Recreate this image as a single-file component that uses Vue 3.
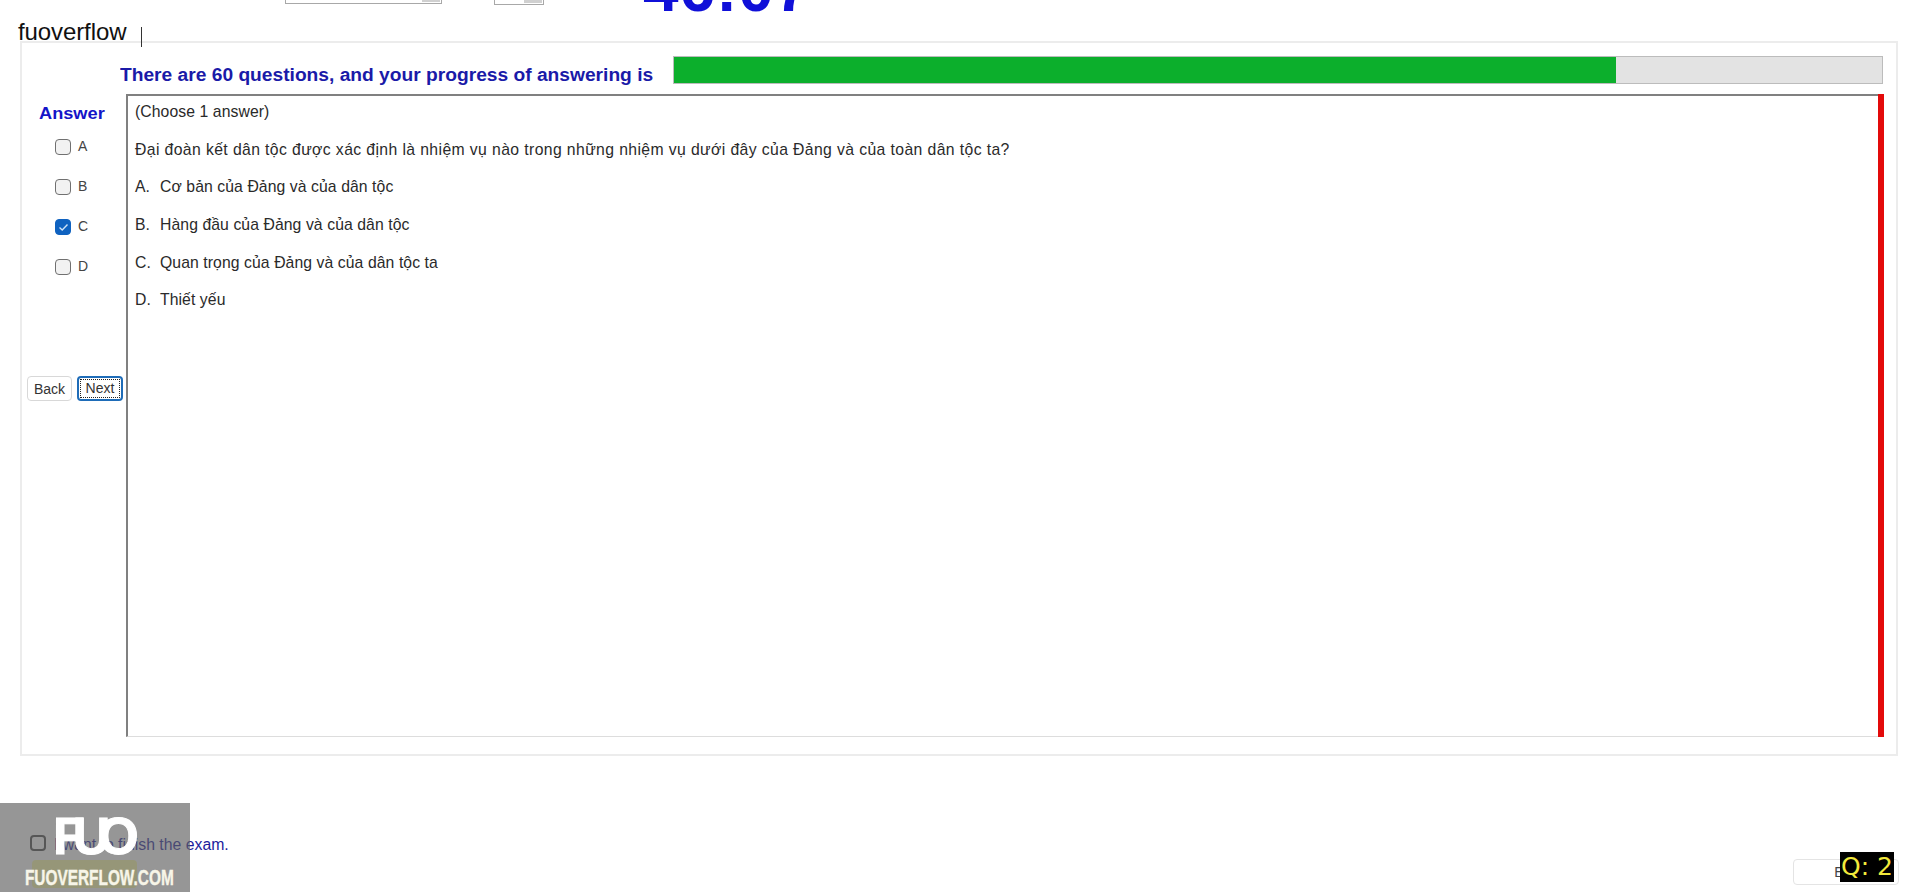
<template>
  <div class="page">
    <!-- header strip, cut off at the top of the page -->
    <div class="top">
      <div class="combo wide"><span class="arrow"></span></div>
      <div class="combo narrow"><span class="arrow"></span></div>
      <div class="clock">46:07</div>
    </div>

    <div class="brand">
      <span class="brand-name">fuoverflow</span>
      <span class="caret"></span>
    </div>

    <div class="panel">
      <div class="progress-row">
        <span class="progress-label">There are 60 questions, and your progress of answering is</span>
        <div class="progress">
          <div class="progress-fill" :style="{ width: progress + '%' }"></div>
        </div>
      </div>

      <div class="body">
        <div class="side">
          <div class="answer-title">Answer</div>
          <label v-for="opt in options" :key="opt.key" class="opt">
            <span class="box" :class="{ checked: opt.key === selected }">
              <svg v-if="opt.key === selected" width="11" height="9" viewBox="0 0 11 9">
                <path d="M1.5 4.5 L4.2 7 L9.5 1.5" fill="none" stroke="#cfe3f7" stroke-width="1.4" />
              </svg>
            </span>
            <span class="opt-key">{{ opt.key }}</span>
          </label>
          <div class="nav">
            <button class="btn">Back</button>
            <button class="btn next"><span class="focus">Next</span></button>
          </div>
        </div>

        <div class="question">
          <p class="line first">(Choose 1 answer)</p>
          <p class="line stem">{{ stem }}</p>
          <p v-for="opt in options" :key="opt.key" class="line">
            <span class="letter">{{ opt.key }}.</span>{{ opt.text }}
          </p>
          <div class="red"></div>
        </div>
      </div>
    </div>

    <div class="footer">
      <div class="finish-col">
        <label class="finish">
          <span class="box dark"></span>
          <span class="finish-text">I want to finish the exam.</span>
        </label>
        <div class="finish-btn"></div>
      </div>
      <button class="exit">Exit</button>
    </div>

    <!-- watermark logo and question tag lie over the footer -->
    <div class="watermark">
      <div class="logo">FUO</div>
      <div class="site">FUOVERFLOW.COM</div>
    </div>
    <div class="qtag">Q: 2</div>
  </div>
</template>

<script setup>
const progress = 78
const selected = 'C'
const stem = 'Đại đoàn kết dân tộc được xác định là nhiệm vụ nào trong những nhiệm vụ dưới đây của Đảng và của toàn dân tộc ta?'
const options = [
  { key: 'A', text: 'Cơ bản của Đảng và của dân tộc' },
  { key: 'B', text: 'Hàng đầu của Đảng và của dân tộc' },
  { key: 'C', text: 'Quan trọng của Đảng và của dân tộc ta' },
  { key: 'D', text: 'Thiết yếu' }
]
</script>

<style>
html, body {
  margin: 0;
  background: #fff;
  overflow: hidden;
}
</style>

<style scoped>
.page {
  position: relative;
  width: 1920px;
  height: 892px;
  overflow: hidden;
  font-family: "Liberation Sans", Arial, sans-serif;
  color: #222;
}

.top {
  height: 4px;
  display: flex;
  align-items: flex-start;
  padding-left: 285px;
}

.combo {
  border: 1px solid #a8a8a8;
  border-top: none;
  position: relative;
}

.wide { width: 155px; height: 3px; }
.narrow { width: 48px; height: 4px; margin-left: 52px; }

.arrow {
  position: absolute;
  right: 1px;
  bottom: 1px;
  width: 18px;
  height: 3px;
  background: #d0d0d0;
}

.clock {
  margin-left: 99px;
  height: 4px;
  line-height: 0;
  font-size: 64px;
  letter-spacing: 0.9px;
  font-weight: 700;
  color: #1010d8;
  width: 170px;
  white-space: nowrap;
  transform: translateY(-11px);
}

.brand {
  height: 37px;
  display: flex;
  align-items: flex-start;
  padding-left: 18px;
}

.brand-name {
  margin-top: 15px;
  font-size: 24px;
  line-height: 26px;
  color: #111;
  letter-spacing: -0.1px;
}

.caret {
  margin: 23px 0 0 15px;
  width: 1px;
  height: 20px;
  background: #333;
}

.panel {
  margin-left: 20px;
  width: 1878px;
  height: 715px;
  box-sizing: border-box;
  border: 2px solid #ececec;
  padding: 13px 12px 16px 0;
}

.progress-row {
  display: flex;
  align-items: center;
  height: 28px;
  padding-left: 98px;
}

.progress-label {
  width: 553px;
  margin-top: 10px;
  font-size: 18px;
  font-weight: 700;
  color: #1a1aa8;
  white-space: nowrap;
  transform: scaleX(1.066);
  transform-origin: left center;
}

.progress {
  flex: 1;
  height: 28px;
  margin-right: 1px;
  box-sizing: border-box;
  background: #e3e3e3;
  border: 1px solid #bcbcbc;
}

.progress-fill {
  height: 100%;
  background: #0caf2c;
}

.body {
  display: flex;
  margin-top: 10px;
}

.side {
  width: 104px;
  flex: none;
}

.answer-title {
  margin: 10px 0 0 17px;
  font-size: 17px;
  line-height: 20px;
  font-weight: 700;
  color: #1414c8;
  transform: scaleX(1.07);
  transform-origin: left center;
}

.opt {
  display: flex;
  align-items: center;
  height: 40px;
  padding-left: 33px;
  font-size: 14px;
  color: #444;
}

.opt:first-of-type { margin-top: 3px; }

.box {
  width: 16px;
  height: 16px;
  box-sizing: border-box;
  border: 1px solid #707070;
  border-radius: 4px;
  background: #f2f2f2;
  display: flex;
  align-items: center;
  justify-content: center;
}

.box.checked {
  background: #0f62c0;
  border-color: #0f62c0;
}

.box.dark {
  border: 2px solid #444;
  background: transparent;
  margin-top: -5px;
}

.opt-key {
  margin: -2px 0 0 7px;
}

.nav {
  display: flex;
  gap: 5px;
  margin: 89px 0 0 5px;
}

.btn {
  width: 45px;
  height: 25px;
  padding: 0;
  box-sizing: border-box;
  background: #fff;
  border: 1px solid #d8d8d8;
  border-radius: 4px;
  font-family: inherit;
  font-size: 14px;
  color: #333;
}

.next {
  width: 46px;
  border: 2px solid #1e6cb8;
}

.focus {
  display: block;
  margin: 1px;
  line-height: 17px;
  border: 1px dotted #222;
}

.question {
  flex: 1;
  position: relative;
  height: 643px;
  box-sizing: border-box;
  border-top: 2px solid #808080;
  border-left: 2px solid #808080;
  border-bottom: 1px solid #ddd;
  padding-left: 7px;
}

.line {
  margin: 0;
  height: 37.7px;
  line-height: 20px;
  font-size: 15.75px;
  letter-spacing: 0.08px;
  color: #2a2a2a;
  white-space: nowrap;
}

.first { margin-top: 6px; }

.stem { letter-spacing: 0.39px; }

.letter {
  display: inline-block;
  width: 25px;
}

.red {
  position: absolute;
  top: -2px;
  right: 0;
  bottom: -1px;
  width: 6px;
  background: #e30a0a;
}

.footer {
  display: flex;
  justify-content: space-between;
  padding: 0 21px 0 30px;
  margin-top: 78px;
}

.finish {
  display: flex;
  align-items: center;
  height: 22px;
  gap: 8px;
  font-size: 15.8px;
  color: #1c1c9c;
}

.finish-btn {
  width: 105px;
  height: 28px;
  margin: 4px 0 0 2px;
  background: #ffffa8;
  border-radius: 4px;
}

.exit {
  width: 106px;
  height: 26px;
  margin-top: 25px;
  background: #fff;
  border: 1px solid #e4e4e4;
  border-radius: 4px;
  font-family: inherit;
  font-size: 14px;
  color: #444;
}

.watermark {
  position: absolute;
  left: 0;
  bottom: 0;
  width: 190px;
  height: 89px;
  background: rgba(96, 96, 96, 0.66);
  color: #fff;
  font-weight: 700;
}

.logo {
  font-size: 52px;
  line-height: 46px;
  margin: 10px 0 0 53px;
  letter-spacing: -12px;
  -webkit-text-stroke: 1px #fff;
}

.site {
  font-size: 22px;
  line-height: 24px;
  margin: 7px 24px 0 0;
  text-align: center;
  white-space: nowrap;
  transform: scaleX(0.7);
  color: #f7f5e8;
  -webkit-text-stroke: 0.4px #f7f5e8;
}

.qtag {
  position: absolute;
  right: 26px;
  bottom: 10px;
  width: 54px;
  height: 30px;
  background: #000;
  color: #f2e93c;
  font-family: "DejaVu Sans", sans-serif;
  font-size: 25px;
  line-height: 30px;
  white-space: nowrap;
  text-align: center;
}
</style>
